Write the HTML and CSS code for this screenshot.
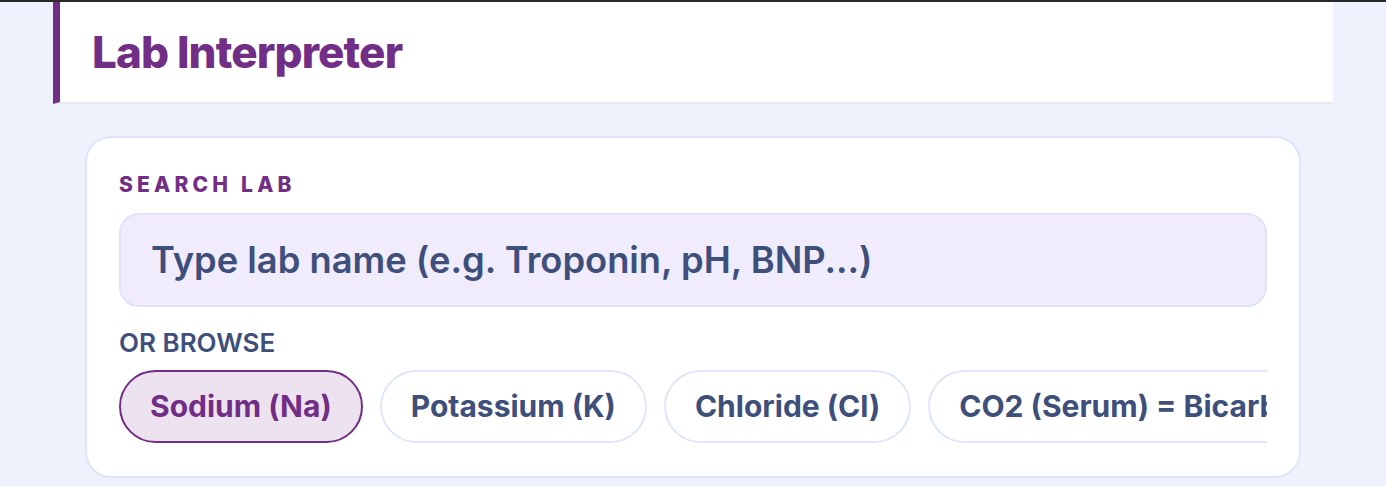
FILE: index.html
```html
<!DOCTYPE html>
<html>
<head>
  <meta charset="UTF-8" />
  <title>Lab Interpreter</title>
  <link rel="stylesheet" href="styles.css">
</head>
<body>
  <div class="topbar"></div>

  <div class="page">
    <header class="header">
      <h1>Lab Interpreter</h1>
    </header>

    <main class="main">
      <section class="card">
        <label class="label" for="labSearch">Search Lab</label>
        <input type="text" id="labSearch" class="search" placeholder="Type lab name (e.g. Troponin, pH, BNP...)" />

        <div class="browse">Or browse</div>
        <div class="chips">
          <button class="chip active">Sodium (Na)</button>
          <button class="chip">Potassium (K)</button>
          <button class="chip">Chloride (Cl)</button>
          <button class="chip">CO2 (Serum) = Bicarbonate</button>
          <button class="chip">BUN</button>
          <button class="chip">Creatinine</button>
          <button class="chip">Glucose</button>
        </div>
      </section>
    </main>
  </div>
</body>
</html>
```

FILE: styles.css
```css
body {
  margin: 0;
  background: #eff1fd;
  font-family: Inter, "Noto Sans", sans-serif;
  color: #3e4f7b;
}
.topbar {
  height: 2px;
  background: #2a2a2c;
}
.page {
  max-width: 1280px;
  margin: 0 auto;
}
.header {
  background: #fff;
  border-left: 7px solid #722e86;
  border-bottom: 2px solid #e6e7ee;
  padding: 24px 32px;
}
.header h1 {
  margin: 0;
  font-size: 44px;
  line-height: 52px;
  font-weight: 800;
  letter-spacing: -0.02em;
  color: #722e86;
}
.main {
  padding: 32px;
}
.card {
  background: #fff;
  border: 2px solid #dfe6fb;
  border-radius: 26px;
  padding: 34px 32px 33px 32px;
}
.label {
  display: block;
  font-size: 21px;
  line-height: 25px;
  font-weight: 800;
  letter-spacing: 0.2em;
  text-transform: uppercase;
  color: #722e86;
  margin-bottom: 16px;
}
.search {
  display: block;
  box-sizing: border-box;
  width: 100%;
  height: 94px;
  padding: 0 30px;
  border: 2px solid #dee5fa;
  border-radius: 20px;
  background: #f1ecfc;
  font-family: inherit;
  font-size: 36.3px;
  font-weight: 600;
  color: #3e4f7b;
  outline: none;
}
.search::placeholder {
  color: #3e4f7b;
  opacity: 1;
}
.browse {
  margin-top: 21px;
  font-size: 26px;
  line-height: 30px;
  font-weight: 600;
  text-transform: uppercase;
  color: #3e4f7b;
}
.chips {
  display: flex;
  gap: 17px;
  margin-top: 12px;
  overflow: hidden;
}
.chip {
  flex: none;
  padding: 16px 29px;
  border: 2px solid #dfe6fb;
  border-radius: 999px;
  background: #fff;
  font-family: inherit;
  font-size: 30px;
  line-height: 37px;
  font-weight: 700;
  color: #3e4f7b;
  white-space: nowrap;
  cursor: pointer;
}
.chip.active {
  border-color: #722e86;
  background: #ede3f0;
  color: #722e86;
}
```
